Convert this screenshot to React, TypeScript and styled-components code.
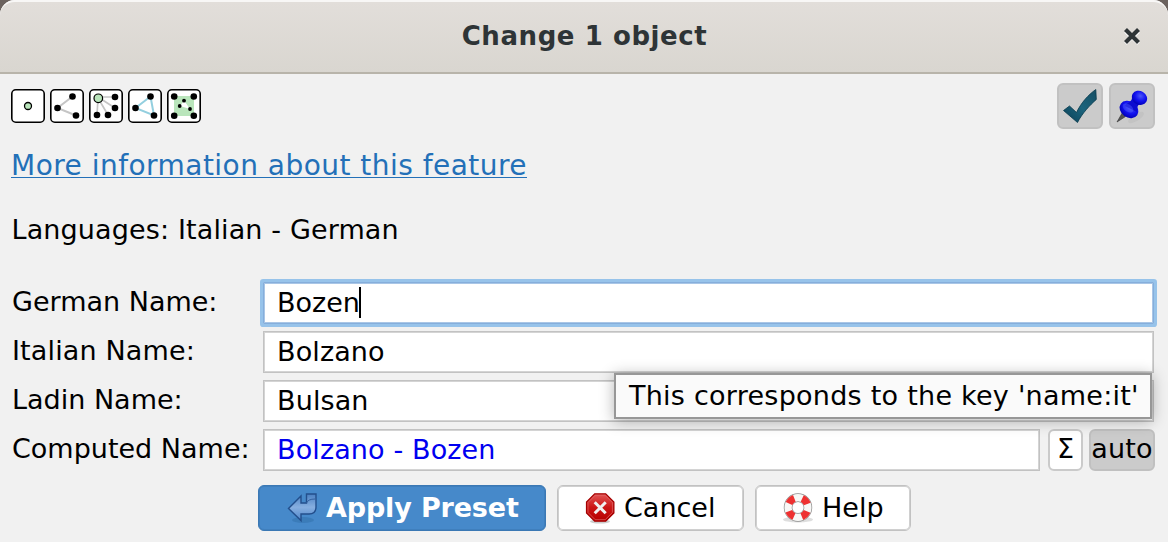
import React from 'react';
import styled, { createGlobalStyle, css } from 'styled-components';

const GlobalStyle = createGlobalStyle`
  *, *::before, *::after { box-sizing: border-box; }
  html, body { margin: 0; padding: 0; background: #6b625e; }
  body { width: 1168px; height: 542px; overflow: hidden; }
`;

const Dialog = styled.div`
  width: 1168px;
  height: 542px;
  display: flex;
  flex-direction: column;
  font-family: 'DejaVu Sans', sans-serif;
  font-size: 27px;
  line-height: 32px;
  color: #000;
  white-space: nowrap;
  background: #f1f1f1;
  border-radius: 15px 15px 0 0;
`;

const TitleBar = styled.header`
  height: 74px;
  flex: none;
  display: grid;
  grid-template-columns: 80px 1fr 80px;
  align-items: center;
  background: linear-gradient(#e2deda, #d9d6d0);
  border-top: 2px solid #f8f7f6;
  border-bottom: 2px solid #b8b4aa;
  border-radius: 15px 15px 0 0;
`;

const Title = styled.h1`
  grid-column: 2;
  margin: 0 0 2px 1px;
  text-align: center;
  font-size: 26px;
  letter-spacing: 0.58px;
  font-weight: bold;
  color: #2e3436;
`;

const CloseButton = styled.button`
  border: 0;
  padding: 0;
  background: none;
  display: flex;
  justify-self: start;
  margin: 0 0 2px 36px;
`;

const Toolbar = styled.div`
  display: flex;
  justify-content: space-between;
  align-items: center;
  height: 46px;
  margin: 9px 13px 0 11px;
`;

const Group = styled.div<{ $gap: number }>`
  display: flex;
  gap: ${(p) => p.$gap}px;
`;

const ToggleButton = styled.button`
  width: 46px;
  height: 46px;
  padding: 0;
  display: grid;
  place-items: center;
  background: #cbcbcb;
  border: 2px solid #c1c1c1;
  border-radius: 6px;
`;

const FeatureLink = styled.a`
  align-self: flex-start;
  margin: 20px 0 0 11px;
  height: 29px;
  line-height: 33px;
  font-size: 28px;
  letter-spacing: 0.47px;
  color: #2370b8;
  border-bottom: 1px solid #2370b8;
`;

const Languages = styled.p`
  margin: 36px 0 0 11.5px;
  height: 32px;
  letter-spacing: 0.13px;
`;

const Form = styled.form`
  margin: 36px 14px 0 12px;
  display: grid;
  grid-template-columns: 251px 1fr;
  grid-auto-rows: 42px;
  row-gap: 7px;
`;

const Label = styled.label<{ $spacing?: number }>`
  line-height: 40px;
  letter-spacing: ${(p) => p.$spacing ?? 0}px;
`;

const FieldRow = styled.div<{ $overhang?: number }>`
  display: flex;
  margin-right: ${(p) => -(p.$overhang ?? 0)}px;
`;

const Field = styled.div<{ $focused?: boolean; $computed?: boolean }>`
  flex: 1;
  display: flex;
  align-items: center;
  padding: 0 0 1px 13px;
  letter-spacing: ${(p) => (p.$focused ? 0 : 0.12)}px;
  background: #fff;
  border: 1px solid #c2c2c2;
  box-shadow: inset 0 0 0 1px #d4d4d4;
  color: ${(p) => (p.$computed ? '#0000f0' : '#000')};
  ${(p) =>
    p.$focused &&
    css`
      border-color: #86aedb;
      box-shadow: inset 0 0 0 1px #a9c6e6, 0 0 0 3px #97c3ea;
      border-radius: 1px;
    `}
`;

const Caret = styled.span`
  width: 2px;
  height: 31px;
  margin-left: -1px;
  background: #000;
`;

const SmallButton = styled.button<{ $width: number; $gap: number; $pressed?: boolean }>`
  width: ${(p) => p.$width}px;
  margin-left: ${(p) => p.$gap}px;
  padding: 0 0 3px;
  display: flex;
  align-items: center;
  justify-content: center;
  font: inherit;
  letter-spacing: 0.15px;
  color: #000;
  background: ${(p) => (p.$pressed ? '#cbcbcb' : '#fff')};
  border: 2px solid ${(p) => (p.$pressed ? '#c0c0c0' : '#cacaca')};
  border-radius: 6px;
`;

const Actions = styled.footer`
  display: flex;
  margin: 14px 0 0 258px;
`;

const ActionButton = styled.button<{ $width: number; $primary?: boolean }>`
  width: ${(p) => p.$width}px;
  height: 46px;
  margin-right: 11px;
  padding: 0 0 0 ${(p) => (p.$primary ? 28 : 27)}px;
  display: flex;
  align-items: center;
  gap: 7px;
  font: inherit;
  font-weight: ${(p) => (p.$primary ? 'bold' : 'normal')};
  letter-spacing: ${(p) => (p.$primary ? -0.15 : 0)}px;
  color: ${(p) => (p.$primary ? '#fff' : '#000')};
  background: ${(p) => (p.$primary ? '#4689ca' : '#fff')};
  border: 1px solid ${(p) => (p.$primary ? '#3b78b4' : '#c2c2c2')};
  box-shadow: inset 0 0 0 1px ${(p) => (p.$primary ? '#3f7fbd' : '#d0d0d0')};
  border-radius: 6px;
`;

const Tooltip = styled.div`
  position: absolute;
  left: 614px;
  top: 373px;
  width: 538px;
  height: 46px;
  padding: 5px 0 0 13px;
  letter-spacing: 0.25px;
  background: #fafafa;
  border: 2px solid #979797;
  box-shadow: 0 2px 14px rgba(0, 0, 0, 0.3);
`;

const dots: Record<string, number[][]> = {
  way: [[22.5, 7.5], [7.5, 19], [26, 26.5]],
  relation: [[26, 8], [26, 19], [8, 26], [19, 26]],
  closed: [[22.5, 7.5], [7.5, 19], [26, 26.5]],
  multi: [[7.2, 7.5], [26.8, 7.5], [7.2, 26.8], [26.8, 26.8]],
};

const GeometryIcon = ({ kind }: { kind: string }) => (
  <svg width="34" height="34" viewBox="0 0 34 34">
    <rect x="0.8" y="0.8" width="32.4" height="32.4" rx="4" fill="#fff" stroke="#000" strokeWidth="1.6" />
    {kind === 'node' && <circle cx="17" cy="17" r="3.5" fill="#b9e5bb" stroke="#000" strokeWidth="1.3" />}
    {kind === 'way' && <path d="M22.5 7.5 7.5 19 26 26.5" fill="none" stroke="#c5c5c5" strokeWidth="2" />}
    {kind === 'relation' && (
      <path d="M26 8H9L26 19M9 9 8 26M9 9 19 26" fill="none" stroke="#c5c5c5" strokeWidth="1.7" />
    )}
    {kind === 'closed' && <path d="M22.5 7.5 7.5 19 26 26.5Z" fill="none" stroke="#93cfdf" strokeWidth="2" />}
    {kind === 'multi' && (
      <>
        <path d="M7 7h20v20H7z" fill="#b9e5bb" />
        <path d="M17 11.5 13 17l10 3Z" fill="#fff" />
        {[[17, 11.7], [12.7, 17], [23, 20]].map(([x, y]) => (
          <circle key={x} cx={x} cy={y} r="1.9" />
        ))}
      </>
    )}
    {(dots[kind] ?? []).map(([x, y]) => (
      <circle key={`${x}-${y}`} cx={x} cy={y} r="3.3" />
    ))}
    {kind === 'relation' && <circle cx="9.3" cy="9.3" r="4.3" fill="#b9e5bb" stroke="#000" strokeWidth="1.2" />}
  </svg>
);

const CheckIcon = () => (
  <svg width="36" height="36" viewBox="0 0 36 36">
    <defs>
      <linearGradient id="check" x1="0" y1="1" x2="1" y2="0">
        <stop offset="0" stopColor="#093f55" />
        <stop offset=".5" stopColor="#1c647d" />
        <stop offset="1" stopColor="#154e63" />
      </linearGradient>
    </defs>
    <path d="M1.500 22.500 7.500 18l7 6.500C19 15 26 7 33.800 1.500l.5 10C28 17 20 25.500 15.500 34.500Z" fill="url(#check)" stroke="#083a4d" strokeWidth=".8" />
  </svg>
);

const PinIcon = () => (
  <svg width="36" height="36" viewBox="0 0 36 36">
    <defs>
      <radialGradient id="pinHead" cx=".5" cy=".35" r=".65">
        <stop offset="0" stopColor="#4c58f8" />
        <stop offset=".55" stopColor="#1212f0" />
        <stop offset="1" stopColor="#0000b4" />
      </radialGradient>
    </defs>
    <ellipse cx="22" cy="29.500" rx="9" ry="3.500" fill="#bfbfbf" opacity=".7" transform="rotate(-32 22 29.500)" />
    <path d="M8.500 24.500 3 34 11.500 28.500Z" fill="#555" stroke="#333" strokeWidth=".6" />
    <ellipse cx="15" cy="21.500" rx="10" ry="8" transform="rotate(35 15 21.500)" fill="url(#pinHead)" />
    <path d="M11 18c1-3 7-4 7-8l8 6c-3 1-3 5-3 8Z" fill="#0c0cd0" />
    <ellipse cx="25.500" cy="9.800" rx="7.900" ry="6.800" transform="rotate(30 25.500 9.800)" fill="url(#pinHead)" />
    <ellipse cx="14" cy="20" rx="6" ry="3.600" transform="rotate(35 14 20)" fill="#5664ff" opacity=".4" />
  </svg>
);

const EnterIcon = () => (
  <svg width="32" height="32" viewBox="0 0 32 32">
    <defs>
      <linearGradient id="enter" x1="0" y1="0" x2="0" y2="1">
        <stop offset="0" stopColor="#4a80c2" />
        <stop offset=".5" stopColor="#87afe0" />
        <stop offset="1" stopColor="#4f86ca" />
      </linearGradient>
    </defs>
    <ellipse cx="16" cy="28" rx="11" ry="3" fill="#29639c" opacity=".35" />
    <path d="M1.500 16.500 14 4v7h5.500V2H29v13q0 7-7 7h-8v6.500Z" fill="url(#enter)" stroke="#234f8c" strokeWidth="1.4" />
    <path d="M19.500 11Q21 7 28 7" fill="none" stroke="#315f9e" strokeWidth="1" />
  </svg>
);

const CancelIcon = () => (
  <svg width="32" height="32" viewBox="0 0 32 32">
    <defs>
      <linearGradient id="stop" x1="0" y1="0" x2="0" y2="1">
        <stop offset="0" stopColor="#e25656" />
        <stop offset=".5" stopColor="#cb1515" />
        <stop offset="1" stopColor="#b60000" />
      </linearGradient>
    </defs>
    <ellipse cx="15" cy="29.500" rx="10" ry="2" fill="#aaa" opacity=".6" />
    <g transform="translate(-.8 .3)">
      <path d="M10.500 1.500h11l8.200 8.200v11l-8.200 8.200h-11l-8.200-8.200v-11Z" fill="url(#stop)" stroke="#a40000" strokeWidth="1.2" />
      <path d="M11 3h10l7.200 7.200v10L21 27.400H11l-7.200-7.200v-10Z" fill="none" stroke="#e06868" strokeWidth=".7" />
      <path d="m10.500 10 11 11M21.500 10l-11 11" stroke="#f0f0f0" strokeWidth="3" />
    </g>
  </svg>
);

const HelpIcon = () => (
  <svg width="32" height="32" viewBox="0 0 32 32">
    <ellipse cx="15" cy="27.500" rx="15" ry="3" fill="#c8c8c8" opacity=".6" />
    <circle cx="15" cy="15.500" r="9.900" fill="#fff" stroke="#8c8c8c" strokeWidth="8.600" />
    <circle cx="15" cy="15.500" r="9.900" fill="none" stroke="#f8f8f6" strokeWidth="7.200" />
    <circle cx="15" cy="15.500" r="9.900" fill="none" stroke="#ee3131" strokeWidth="7.200" strokeDasharray="7.500 8.051" strokeDashoffset="-4.025" />
  </svg>
);

export default function App() {
  return (
    <>
      <GlobalStyle />
      <Dialog>
        <TitleBar>
          <Title>Change 1 object</Title>
          <CloseButton aria-label="Close">
            <svg width="16" height="18" viewBox="0 0 16 18">
              <path d="m1.500 4.500 13 12M14.500 4.500l-13 12" stroke="#fff" strokeWidth="3.600" />
              <path d="m1.500 2.500 13 13M14.500 2.500l-13 13" stroke="#2e3436" strokeWidth="4.200" />
            </svg>
          </CloseButton>
        </TitleBar>
        <Toolbar>
          <Group $gap={5}>
            {['node', 'way', 'relation', 'closed', 'multi'].map((kind) => (
              <GeometryIcon key={kind} kind={kind} />
            ))}
          </Group>
          <Group $gap={6}>
            <ToggleButton aria-label="Validate"><CheckIcon /></ToggleButton>
            <ToggleButton aria-label="Pin"><PinIcon /></ToggleButton>
          </Group>
        </Toolbar>
        <FeatureLink>More information about this feature</FeatureLink>
        <Languages>Languages: Italian - German</Languages>
        <Form>
          <Label>German Name:</Label>
          <FieldRow><Field $focused>Bozen<Caret /></Field></FieldRow>
          <Label $spacing={0.14}>Italian Name:</Label>
          <FieldRow><Field>Bolzano</Field></FieldRow>
          <Label>Ladin Name:</Label>
          <FieldRow><Field>Bulsan</Field></FieldRow>
          <Label>Computed Name:</Label>
          <FieldRow $overhang={1}>
            <Field $computed>Bolzano - Bozen</Field>
            <SmallButton type="button" $width={35} $gap={8}>Σ</SmallButton>
            <SmallButton type="button" $width={66} $gap={6} $pressed>auto</SmallButton>
          </FieldRow>
        </Form>
        <Actions>
          <ActionButton $width={288} $primary><EnterIcon />Apply Preset</ActionButton>
          <ActionButton $width={187}><CancelIcon />Cancel</ActionButton>
          <ActionButton $width={156}><HelpIcon />Help</ActionButton>
        </Actions>
        <Tooltip role="tooltip">This corresponds to the key 'name:it'</Tooltip>
      </Dialog>
    </>
  );
}
